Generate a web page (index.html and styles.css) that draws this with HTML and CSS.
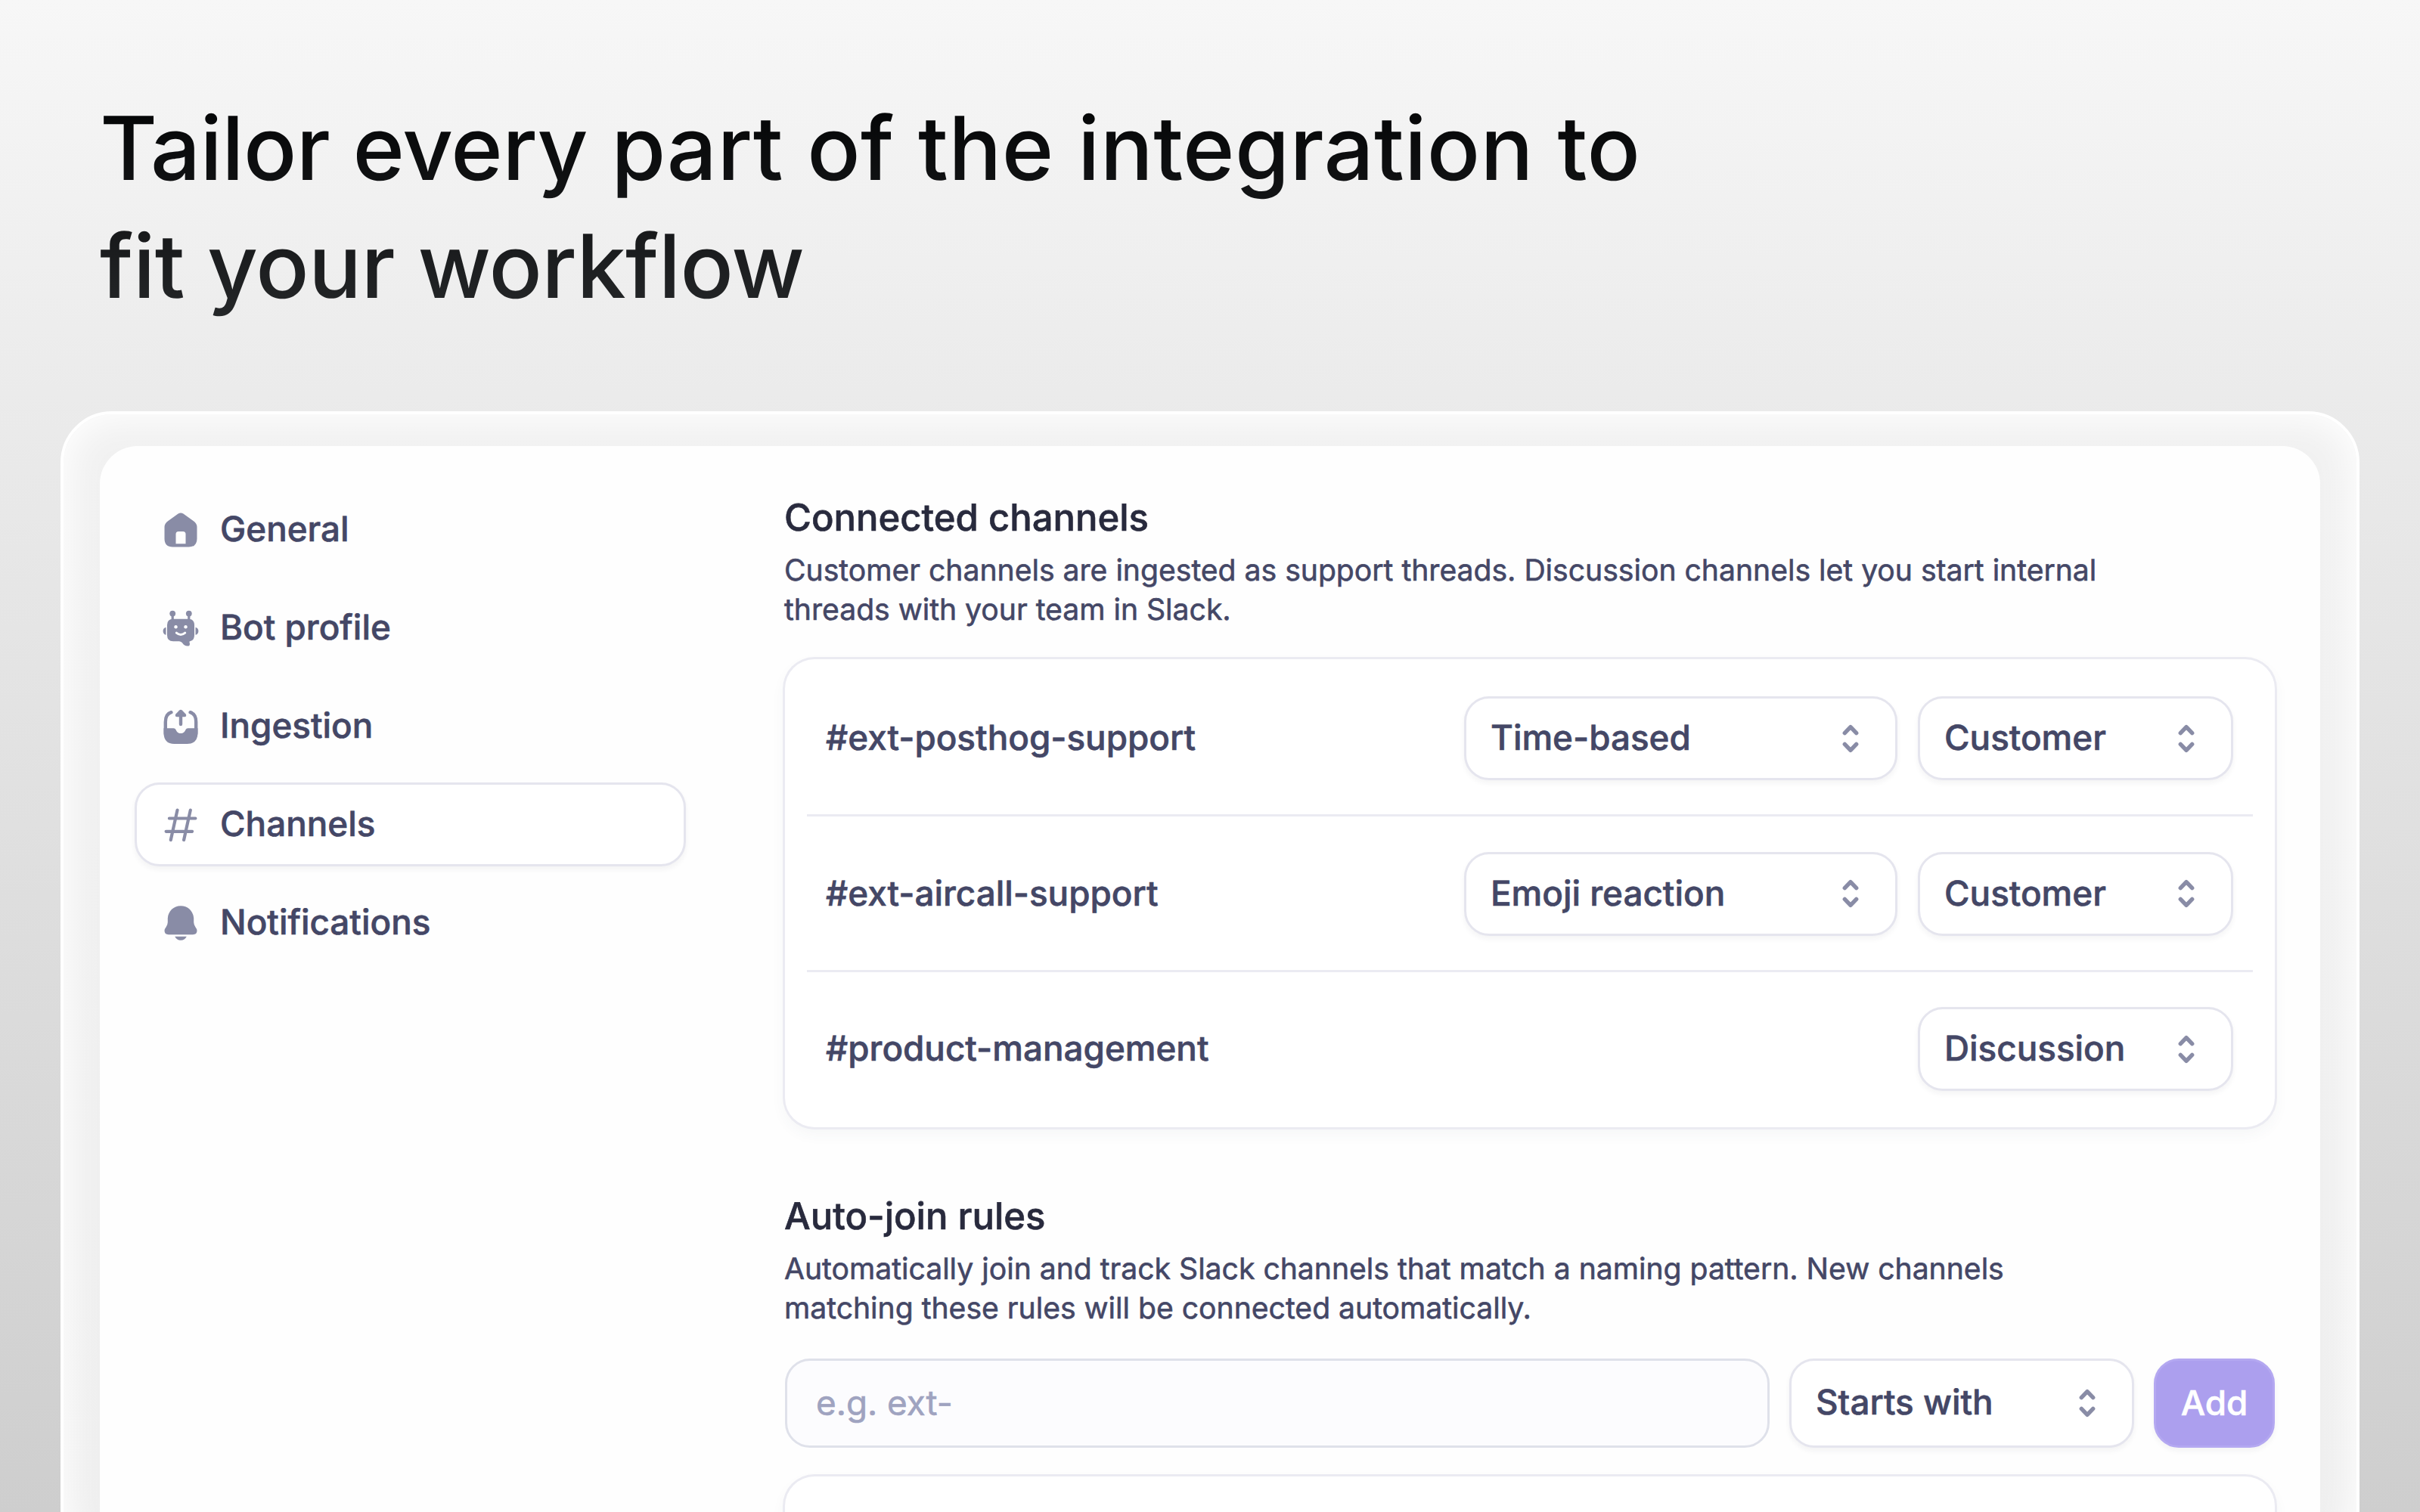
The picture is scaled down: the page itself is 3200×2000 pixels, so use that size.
FILE: index.html
```html
<!DOCTYPE html>
<html lang="en">
<head>
    <meta charset="UTF-8">
    <meta name="viewport" content="width=device-width, initial-scale=1.0">
    <title>Slack integration settings</title>
    <link rel="stylesheet" href="styles.css">
</head>
<body>
    <!-- shared up/down chevron for the selects -->
    <svg class="sprite" width="0" height="0">
        <symbol id="chevrons" viewBox="0 0 52 52">
            <path d="M18.3 18.6 26 10.6l7.7 8M18.3 33.4l7.7 8 7.7-8" fill="none" stroke="currentColor" stroke-width="5.4" stroke-linecap="round" stroke-linejoin="round"/>
        </symbol>
    </svg>

    <h1 class="headline"><span class="tight">Tailor every</span> part of the integration to<br><span class="tight">fit your workflow</span></h1>

    <div class="frame">
        <div class="panel">
            <nav class="sidebar">
                <a class="nav-item">
                    <svg class="icon" viewBox="0 0 52 52">
                        <path fill="currentColor" fill-rule="evenodd" d="M22.6 4.6Q26 2.4 29.4 4.6L42.6 13.9Q47.5 17.4 47.5 22V37.5Q47.5 48.5 36.5 48.5H15.5Q4.5 48.5 4.5 37.5V22Q4.5 17.4 9.4 13.9ZM19.5 44.3H32.5V31.5Q32.5 28 29 28H23Q19.5 28 19.5 31.5Z"/>
                    </svg>
                    General
                </a>
                <a class="nav-item">
                    <svg class="icon" viewBox="0 0 52 52">
                        <g fill="currentColor">
                            <circle cx="15.2" cy="6.6" r="3.9"/>
                            <circle cx="36.8" cy="6.6" r="3.9"/>
                            <path d="M13.6 8h3.2v7h-3.2zM35.2 8h3.2v7h-3.2z"/>
                            <path d="M6.5 24.7C1.3 25.5 1.3 34 6.5 34.8ZM45.5 24.7C50.7 25.5 50.7 34 45.5 34.8Z"/>
                            <path d="M16 13.7H36Q44 13.7 44 21.7V35Q44 42.5 37.6 43.4Q37.3 44.6 37.8 45.6Q38.6 49.6 35 49.6Q30.6 49.4 28.2 45.6Q26.8 43.4 24 43.3H16Q8 43.3 8 35.3V21.7Q8 13.7 16 13.7Z"/>
                        </g>
                        <circle cx="19.5" cy="24.2" r="2.2" fill="#fff"/>
                        <circle cx="32.5" cy="24.2" r="2.2" fill="#fff"/>
                        <path d="M20.3 32.2Q26 36.8 31.7 32.2" fill="none" stroke="#fff" stroke-width="3" stroke-linecap="round"/>
                    </svg>
                    Bot profile
                </a>
                <a class="nav-item">
                    <svg class="icon" viewBox="0 0 52 52">
                        <path d="M13.4 7.2Q5.8 9.6 5.8 20V36M38.6 7.2Q46.2 9.6 46.2 20V36M26 12V23" fill="none" stroke="currentColor" stroke-width="4.4" stroke-linecap="round"/>
                        <path fill="currentColor" d="M24.2 4.4Q26 3 27.8 4.4L32.6 9.6Q34.4 13.3 30.8 13.3H21.2Q17.6 13.3 19.4 9.6Z"/>
                        <path fill="currentColor" d="M3.5 28.3H16.5Q18.6 28.3 19.4 30C21 33.2 22.4 35 26 35S31 33.2 32.6 30Q33.4 28.3 35.5 28.3H48.5V34Q48.5 49 34.5 49H17.5Q3.5 49 3.5 34Z"/>
                    </svg>
                    Ingestion
                </a>
                <a class="nav-item active">
                    <svg class="icon" viewBox="0 0 52 52">
                        <path d="M10.9 17.5H45.4M6.6 34.8H41.1M21.5 6.6 12.8 46M38.8 6.6 30.1 46" fill="none" stroke="currentColor" stroke-width="4.2" stroke-linecap="round"/>
                    </svg>
                    Channels
                </a>
                <a class="nav-item">
                    <svg class="icon" viewBox="0 0 52 52">
                        <path fill="currentColor" d="M26 3.2C35.5 3.2 42.4 10 43.2 19.5V25Q43.4 28.6 45.4 31.2Q47.5 33.8 47.5 36Q47.5 41.2 42 41.2H10Q4.5 41.2 4.5 36Q4.5 33.8 6.6 31.2Q8.6 28.6 8.8 25V19.5C9.6 10 16.5 3.2 26 3.2ZM18.2 43.7H33.8Q31.2 48.8 26 48.8T18.2 43.7Z"/>
                    </svg>
                    Notifications
                </a>
            </nav>

            <main class="content">
                <section>
                    <h2>Connected channels</h2>
                    <p>Customer channels are ingested as support threads. Discussion channels let you start internal threads with your team in Slack.</p>
                    <div class="card">
                        <div class="row">
                            <span class="channel">#ext-posthog-support</span>
                            <div class="select wide">Time-based<svg class="icon"><use href="#chevrons"/></svg></div>
                            <div class="select">Customer<svg class="icon"><use href="#chevrons"/></svg></div>
                        </div>
                        <div class="row">
                            <span class="channel">#ext-aircall-support</span>
                            <div class="select wide">Emoji reaction<svg class="icon"><use href="#chevrons"/></svg></div>
                            <div class="select">Customer<svg class="icon"><use href="#chevrons"/></svg></div>
                        </div>
                        <div class="row">
                            <span class="channel">#product-management</span>
                            <div class="select">Discussion<svg class="icon"><use href="#chevrons"/></svg></div>
                        </div>
                    </div>
                </section>

                <section>
                    <h2>Auto-join rules</h2>
                    <p>Automatically join and track Slack channels that match a naming pattern. New channels matching these rules will be connected automatically.</p>
                    <div class="rule-form">
                        <input type="text" placeholder="e.g. ext-">
                        <div class="select match">Starts with<svg class="icon"><use href="#chevrons"/></svg></div>
                        <button>Add</button>
                    </div>
                    <div class="card rules"></div>
                </section>
            </main>
        </div>
    </div>
</body>
</html>
```
FILE: styles.css
```css
* {
    box-sizing: border-box;
}

html {
    overflow: hidden;
}

body {
    margin: 0;
    height: 2000px;
    overflow: hidden;
    display: flex;
    flex-direction: column;
    font-family: Inter, sans-serif;
    font-size: 45.8px;
    font-weight: 500;
    text-rendering: geometricPrecision;
    color: #444766;
    background: linear-gradient(#f7f7f7, #ebebeb 26%, #d8d8d8 75%, #cecece);
}

.sprite {
    position: absolute;
}

.headline {
    flex: none;
    height: 312px;
    margin: 119px 132px 113px;
    font-size: 116.6px;
    font-weight: 500;
    line-height: 156px;
    letter-spacing: 0.35px;
    color: transparent;
    background: linear-gradient(#020304, #26282a);
    background-clip: text;
    -webkit-background-clip: text;
}

.headline .tight {
    letter-spacing: -0.65px;
}

/* outer glass frame, runs off the bottom of the page */
.frame {
    flex: none;
    height: 1520px;
    margin: 0 80px;
    padding: 42px 48px 0;
    border: 4px solid #fff;
    border-radius: 68px;
    background: linear-gradient(#f1f1f1, #eeeeee);
    box-shadow: inset 0 0 52px 6px #fff;
}

.panel {
    display: flex;
    height: 1470px;
    padding: 54px 60px 0 46px;
    border-radius: 50px;
    background: #fefefe;
    -webkit-text-stroke: 0.6px;
}

.sidebar {
    display: flex;
    flex-direction: column;
    gap: 19px;
    width: 729px;
    margin-right: 131px;
    padding-top: 1px;
}

.nav-item {
    display: flex;
    flex: none;
    align-items: center;
    gap: 26px;
    height: 111px;
    padding-left: 32px;
    border: 3px solid transparent;
    border-radius: 33px;
}

.nav-item.active {
    background: #fff;
    border-color: #e5e5ee;
    box-shadow: 0 4px 7px rgba(40, 42, 61, 0.05);
}

.icon {
    flex: none;
    width: 52px;
    height: 52px;
    color: #898ca6;
}

.content {
    width: 1970px;
    padding-top: 9px;
}

section + section {
    margin-top: 86px;
}

h2 {
    margin: 0 0 12px -1px;
    font-size: 49px;
    font-weight: 500;
    line-height: 64px;
    color: #282a3d;
}

p {
    max-width: 1760px;
    margin: 0 0 38px -1px;
    font-size: 39.12px;
    font-weight: 400;
    line-height: 52.3px;
}

.card {
    padding: 3px 29px;
    border-radius: 39px;
    background: #fff;
    box-shadow: 0 0 0 3px #ebebf2, 0 8px 20px rgba(68, 71, 102, 0.05);
}

.card.rules {
    height: 200px;
    margin-top: 38px;
}

.row {
    display: flex;
    align-items: center;
    gap: 27px;
    height: 205.5px;
    padding: 2px 26px 0 25px;
    border-bottom: 3px solid #ebebf2;
}

.row:last-child {
    height: 202.5px;
    border-bottom: none;
}

.channel {
    flex: 1;
}

.select {
    display: flex;
    align-items: center;
    justify-content: space-between;
    width: 417px;
    height: 111px;
    padding: 0 33px 0 32px;
    border: 3px solid #e5e5ee;
    border-radius: 33px;
    background: #fff;
    box-shadow: 0 4px 7px rgba(40, 42, 61, 0.05);
}

.select.wide {
    width: 573px;
}

.select.match {
    width: 456px;
    height: 118px;
}

.rule-form {
    display: flex;
    gap: 26px;
    height: 118px;
    margin-top: 39px;
}

.rule-form input {
    flex: 1;
    min-width: 0;
    padding: 0 38px;
    border: 3px solid #dfe1ea;
    border-radius: 33px;
    background: #fcfcfe;
    font: inherit;
    font-weight: 400;
}

.rule-form input::placeholder {
    color: #9fa3c0;
}

.rule-form button {
    width: 160px;
    padding: 0;
    border: 3px solid #b4a8f1;
    border-radius: 33px;
    background: #ac9fee;
    box-shadow: 0 4px 7px rgba(40, 42, 61, 0.05);
    font: inherit;
    color: #fff;
    -webkit-text-stroke: 0.6px;
}
```
